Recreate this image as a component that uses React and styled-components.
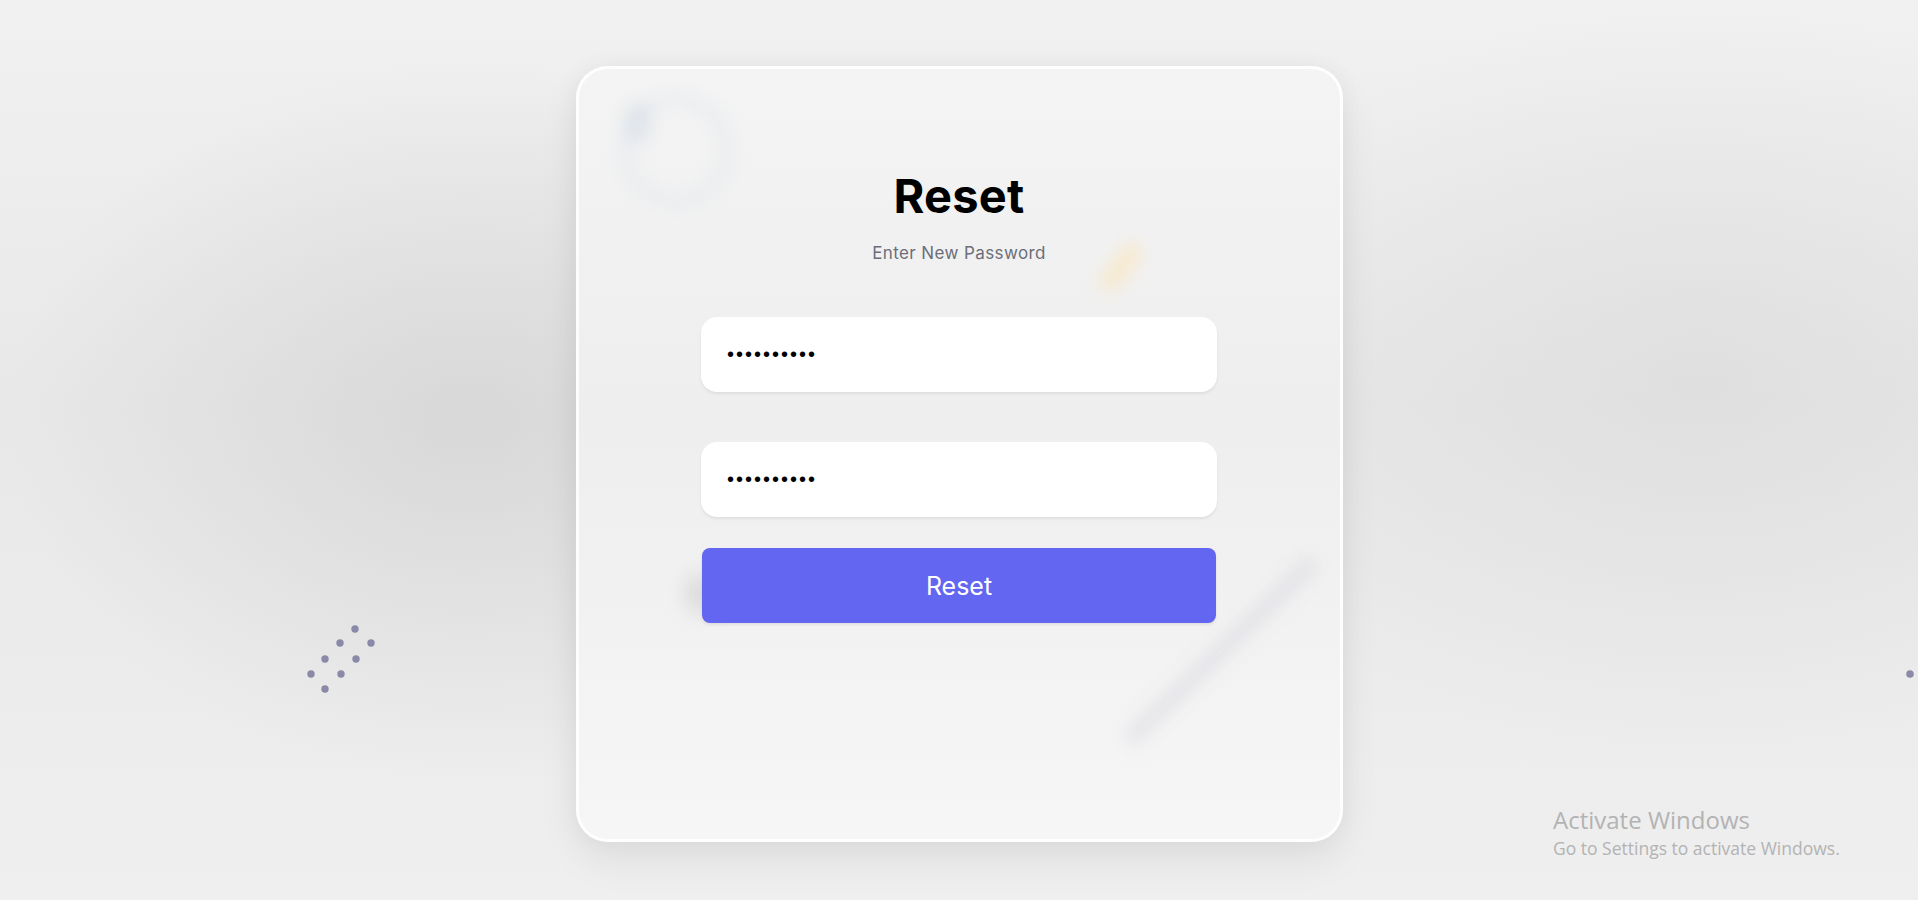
import React from "react";
import styled, { createGlobalStyle } from "styled-components";

const GlobalStyle = createGlobalStyle`
  html, body { margin: 0; padding: 0; }
  body {
    font-family: "Inter", "Noto Sans", sans-serif;
    background: #ececec;
    overflow: hidden;
  }
`;

const Page = styled.main`
  position: relative;
  width: 100%;
  height: 900px;
  box-sizing: border-box;
  padding-top: 66px;
  display: flex;
  justify-content: center;
  align-items: flex-start;
  background:
    radial-gradient(ellipse 460px 360px at 470px 420px, rgba(205,205,205,0.6), rgba(205,205,205,0) 100%),
    radial-gradient(ellipse 520px 380px at 1700px 380px, rgba(212,212,212,0.45), rgba(212,212,212,0) 100%),
    linear-gradient(180deg, #f1f1f1 0%, #e8e8e8 45%, #efefef 100%);
  overflow: hidden;
`;

const Card = styled.section`
  position: relative;
  width: 767px;
  height: 776px;
  box-sizing: border-box;
  border-radius: 32px;
  border: 3px solid rgba(255, 255, 255, 0.85);
  background: linear-gradient(180deg, #f4f4f4 0%, #eeeeee 45%, #f6f6f6 100%);
  box-shadow: 0 18px 40px rgba(0, 0, 0, 0.07), 0 0 24px rgba(0,0,0,0.04);
  display: flex;
  flex-direction: column;
  align-items: center;
  padding-top: 99px;
  overflow: hidden;
`;

const Blur = styled.div`
  position: absolute;
  pointer-events: none;
  filter: blur(${(p) => p.$blur || 6}px);
`;

const Ring = styled(Blur)`
  left: 40px;
  top: 24px;
  width: 90px;
  height: 90px;
  border-radius: 50%;
  border: 12px solid rgba(220, 228, 234, 0.4);
  &::before {
    content: "";
    position: absolute;
    left: -8px;
    top: -4px;
    width: 30px;
    height: 44px;
    border-radius: 50%;
    background: rgba(205, 215, 228, 0.4);
  }
`;

const Yellow = styled(Blur)`
  left: 532px;
  top: 170px;
  width: 20px;
  height: 56px;
  border-radius: 12px;
  transform: rotate(38deg);
  background: rgba(255, 224, 165, 0.45);
`;

const Stroke = styled(Blur)`
  left: 512px;
  top: 575px;
  width: 260px;
  height: 14px;
  border-radius: 8px;
  transform: rotate(-44deg);
  background: rgba(212, 212, 222, 0.6);
`;

const Smudge = styled(Blur)`
  left: 108px;
  top: 505px;
  width: 26px;
  height: 40px;
  border-radius: 50%;
  background: rgba(170, 170, 175, 0.35);
`;

const Title = styled.h1`
  position: relative;
  margin: 0;
  font-family: "Inter", "Noto Sans", sans-serif;
  font-weight: 700;
  font-size: 47px;
  line-height: 56px;
  color: #000;
  letter-spacing: 0.2px;
`;

const Subtitle = styled.p`
  position: relative;
  margin: 18px 0 0;
  font-family: "Inter", "Noto Sans", sans-serif;
  font-size: 17px;
  line-height: 22px;
  color: #6b6e7a;
  letter-spacing: 0.4px;
`;

const Form = styled.form`
  position: relative;
  margin-top: 53px;
  width: 516px;
  display: flex;
  flex-direction: column;
`;

const Input = styled.input`
  box-sizing: border-box;
  width: 100%;
  height: 75px;
  border: none;
  outline: none;
  border-radius: 16px;
  background: #ffffff;
  box-shadow: 0 2px 3px rgba(0, 0, 0, 0.07);
  padding: 0 26px;
  font-family: "Liberation Sans", sans-serif;
  font-size: 20px;
  letter-spacing: 2px;
  color: #000;
  margin-bottom: ${(p) => p.$gap}px;
`;

const Button = styled.button`
  box-sizing: border-box;
  align-self: center;
  width: 514px;
  height: 75px;
  border: none;
  border-radius: 8px;
  background: #6366f1;
  color: #ffffff;
  font-family: "Inter", "Noto Sans", sans-serif;
  font-size: 25px;
  font-weight: 400;
  cursor: pointer;
  box-shadow: 0 2px 3px rgba(0, 0, 0, 0.08);
`;

const Dots = styled.svg`
  position: absolute;
  left: ${(p) => p.$x}px;
  top: ${(p) => p.$y}px;
`;

const Watermark = styled.div`
  position: absolute;
  left: 1553px;
  top: 805px;
  font-family: "Open Sans", "Liberation Sans", sans-serif;
  color: #b3b3b3;
  display: flex;
  flex-direction: column;
  gap: 2px;
`;

const WmTitle = styled.span`
  font-size: 24px;
  line-height: 30px;
`;

const WmSub = styled.span`
  font-size: 17.5px;
  line-height: 23px;
`;

const dotPts = [
  [355, 629], [340, 643], [371, 643], [325, 659],
  [356, 659], [311, 674], [341, 674], [325, 689],
];

export default function App() {
  return (
    <>
      <GlobalStyle />
      <Page>
        <Dots $x={300} $y={620} width="80" height="80" viewBox="300 620 80 80">
          {dotPts.map(([x, y], i) => (
            <circle key={i} cx={x} cy={y} r="3.7" fill="#8a8aa8" />
          ))}
        </Dots>
        <Dots $x={1900} $y={664} width="18" height="20" viewBox="1900 664 18 20">
          <circle cx="1910" cy="674" r="3.8" fill="#8a8aa8" />
        </Dots>
        <Card>
          <Ring $blur={8} />
          <Yellow $blur={8} />
          <Stroke $blur={9} />
          <Smudge $blur={10} />
          <Title>Reset</Title>
          <Subtitle>Enter New Password</Subtitle>
          <Form onSubmit={(e) => e.preventDefault()}>
            <Input type="password" defaultValue="password12" $gap={50} />
            <Input type="password" defaultValue="password12" $gap={31} />
            <Button type="submit">Reset</Button>
          </Form>
        </Card>
        <Watermark>
          <WmTitle>Activate Windows</WmTitle>
          <WmSub>Go to Settings to activate Windows.</WmSub>
        </Watermark>
      </Page>
    </>
  );
}
